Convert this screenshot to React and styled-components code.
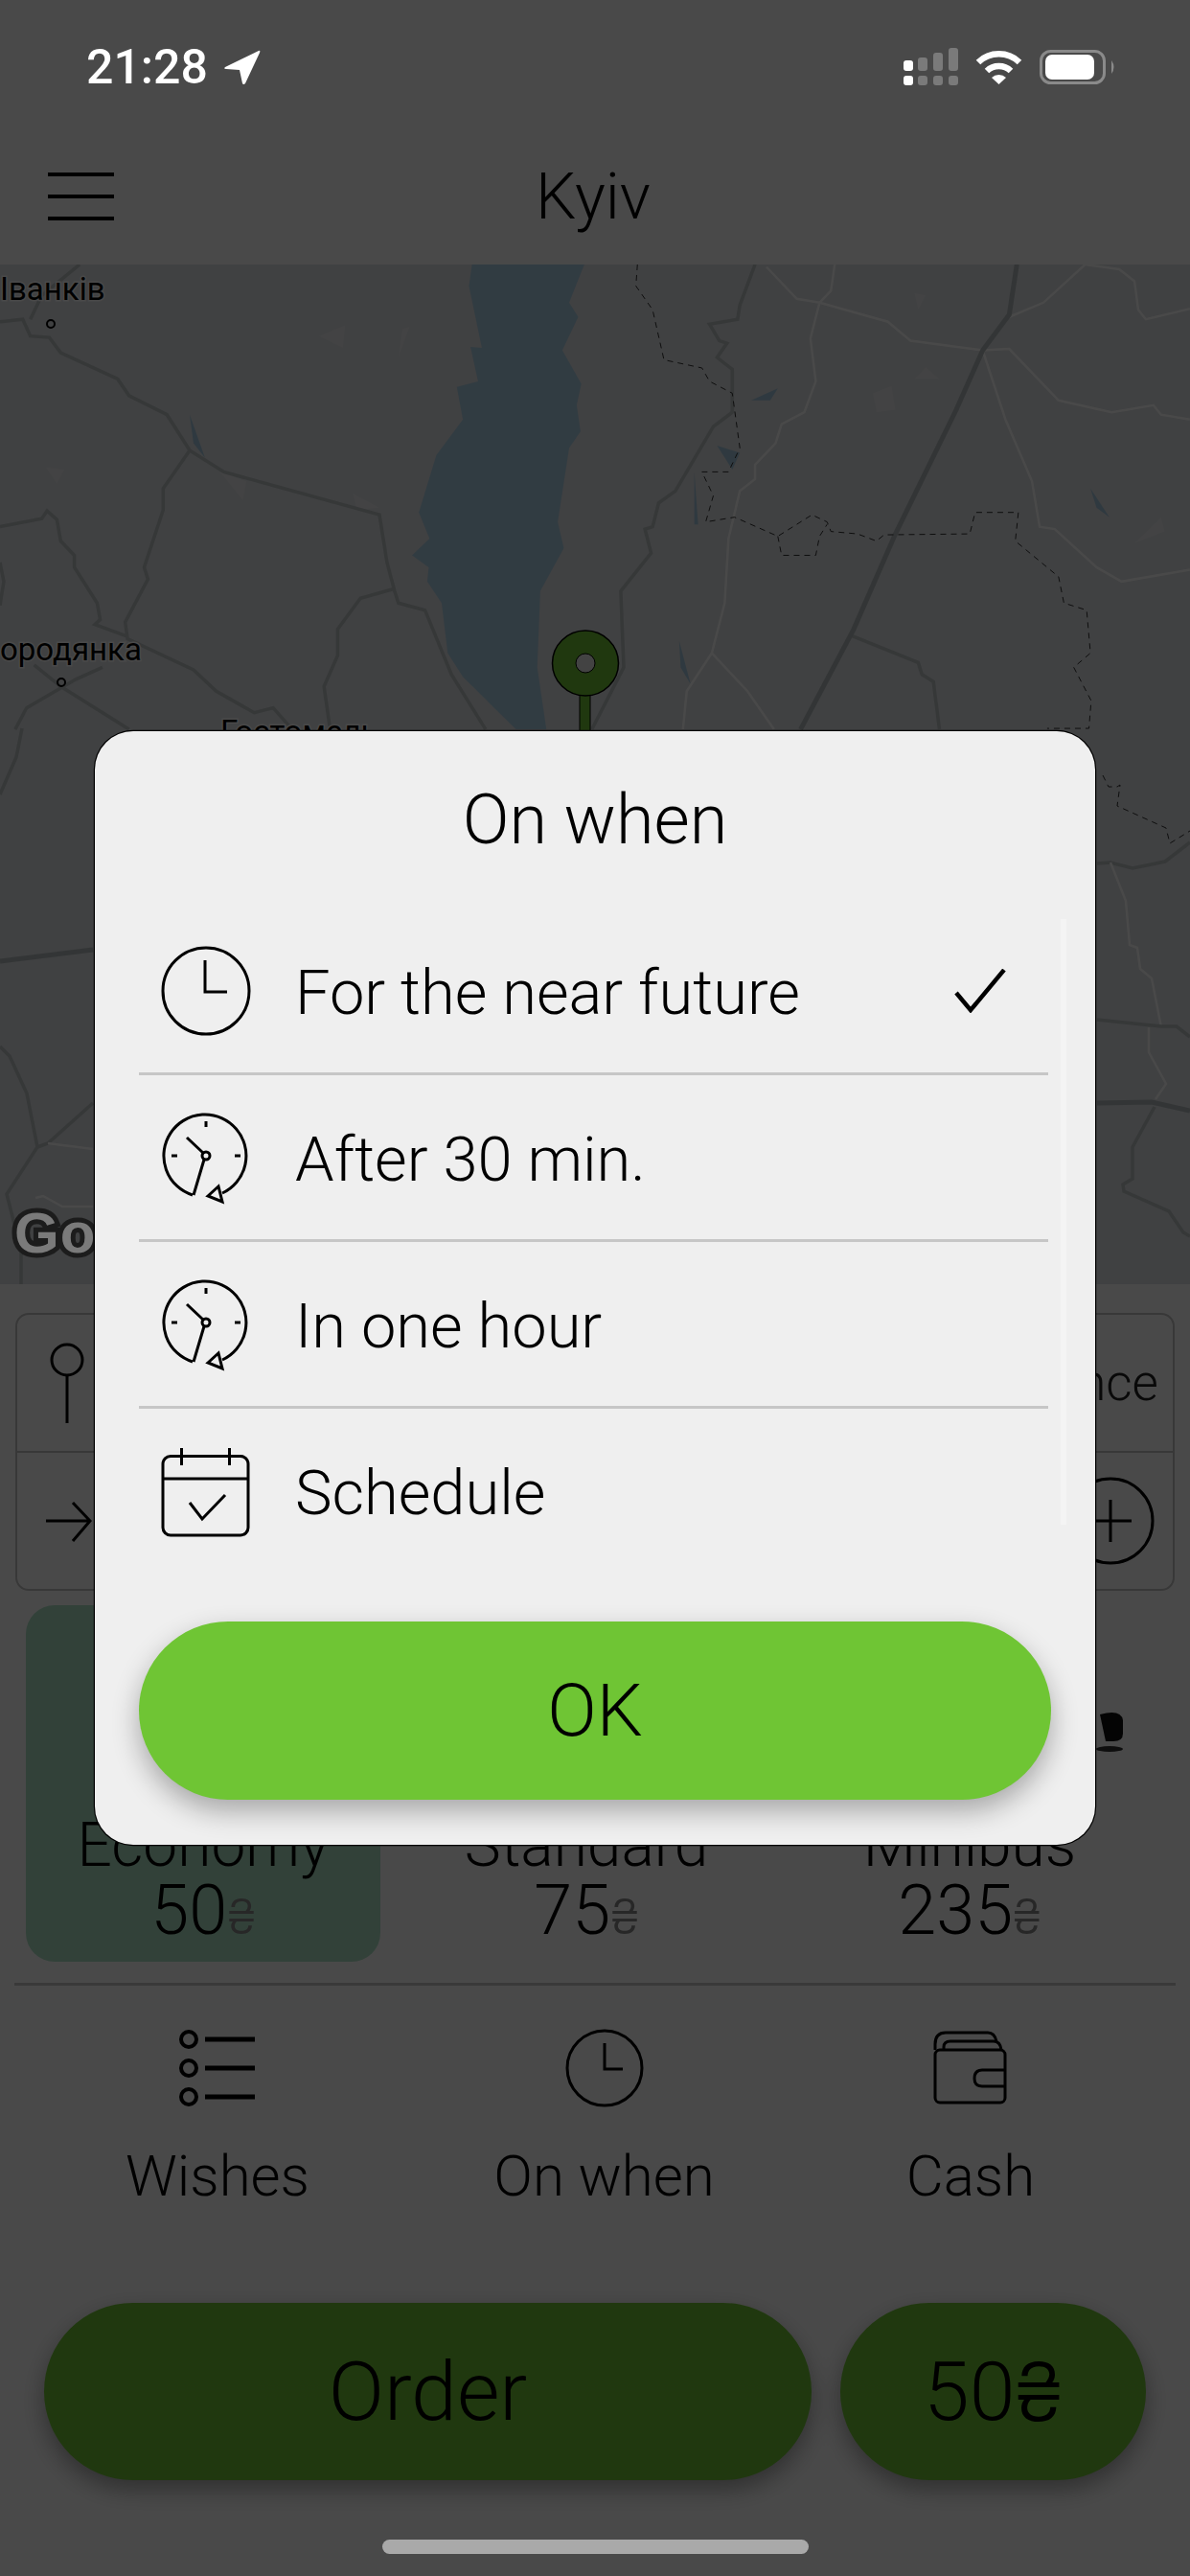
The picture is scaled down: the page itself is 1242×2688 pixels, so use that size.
import styled, { createGlobalStyle } from 'styled-components'

const GlobalStyle = createGlobalStyle`
    html, body { margin: 0; padding: 0; background: #fff; }
    * { box-sizing: border-box; }
    body { font-family: Roboto, "Liberation Sans", sans-serif; font-weight: 300; color: #000; }
`;

const Page = styled.div`
    position: relative;
    width: 1242px;
    height: 2688px;
    overflow: hidden;
    background: #fff;
`;

/* ---- underlay ---- */
const TopBar = styled.header`
    height: 276px;
    padding: 134px 50px 0;
    display: grid;
    grid-template-columns: 1fr auto 1fr;
    align-items: center;
`;
const Burger = styled.div`
    width: 69px;
    height: 50px;
    display: flex;
    flex-direction: column;
    justify-content: space-between;
    span { height: 4px; background: #000; }
`;
const City = styled.div`
    font-size: 67px;
    margin-right: 4px;
`;

const MapArea = styled.div`
    height: 1064px;
    background: #dee1e5;
    overflow: hidden;
    svg { display: block; }
`;
const Road = styled.path`
    fill: none;
    vector-effect: non-scaling-stroke;
    stroke: ${p => p.$kind === 'main' ? '#b2babc' : p.$kind === 'thin' ? '#fff' : p.$kind === 'border' ? '#333' : '#bcc2c4'};
    stroke-width: ${p => p.$kind === 'main' ? 5 : p.$kind === 'thin' ? 2.5 : p.$kind === 'border' ? 1 : 3.5};
    stroke-dasharray: ${p => p.$kind === 'border' ? '6 5' : 'none'};
`;
const Place = styled.text`
    font-family: Roboto, sans-serif;
    font-weight: 400;
    font-size: 33px;
    fill: #000;
    stroke: #fff;
    stroke-width: 3px;
    paint-order: stroke;
`;

const AddressCard = styled.section`
    margin: 30px 16px 0 16px;
    height: 290px;
    border: 2px solid #c4c4c4;
    border-radius: 14px;
    display: flex;
    flex-direction: column;
`;
const AddressRow = styled.div`
    flex: 1;
    display: flex;
    align-items: center;
    justify-content: space-between;
    padding: 0 ${p => p.$right}px 0 ${p => p.$left}px;
    border-top: ${p => p.$line ? '2px solid #c4c4c4' : 'none'};
`;
const Entrance = styled.span`
    font-size: 53px;
    color: #222;
`;

const CarGrid = styled.section`
    margin-top: 15px;
    padding-left: 27px;
    display: grid;
    grid-template-columns: repeat(3, 370px);
    column-gap: 30px;
`;
const CarTile = styled.div`
    height: 372px;
    border-radius: 30px;
    background: ${p => p.$active ? '#b0e4c8' : 'transparent'};
    display: flex;
    flex-direction: column;
    align-items: center;
    padding-top: 62px;
    svg { flex: none; }
`;
const CarName = styled.div`
    font-size: 64px;
    line-height: 66px;
    margin-top: 6px;
`;
const CarPrice = styled.div`
    font-size: 72px;
    line-height: 70px;
`;
const Hryvnia = styled.span`
    font-family: Inter, "Liberation Sans", sans-serif;
    font-weight: 300;
    font-size: ${p => p.$big ? '84px' : '50px'};
    color: ${p => p.$big ? '#000' : '#888'};
`;

const Rule = styled.hr`
    margin: 22px 15px 0;
    border: 0;
    border-top: 3px solid #c8c8c8;
`;

const Options = styled.nav`
    height: 331px;
    padding: 45px 0 0 27px;
    display: grid;
    grid-template-columns: 400px 407px 358px;
    align-items: start;
`;
const Option = styled.div`
    display: flex;
    flex-direction: column;
    align-items: center;
    gap: 38px;
    font-size: 60px;
    line-height: 68px;
    svg { display: block; }
`;

const Actions = styled.div`
    padding: 0 46px;
    display: flex;
    gap: 30px;
`;
const Pill = styled.div`
    flex: ${p => p.$grow ? 1 : '0 0 319px'};
    height: 185px;
    border-radius: 93px;
    background: #6fc534;
    box-shadow: 0 10px 24px rgba(0, 0, 0, .35);
    display: flex;
    align-items: center;
    justify-content: center;
    font-size: 86px;
`;

const Dim = styled.div`
    position: absolute;
    inset: 0;
    background: rgba(0, 0, 0, .712);
`;

/* ---- things above the dim layer ---- */
const StatusBar = styled.div`
    position: absolute;
    top: 48px;
    left: 0;
    right: 0;
    height: 44px;
    padding: 0 72px 0 90px;
    display: flex;
    align-items: center;
    justify-content: space-between;
    svg { display: block; }
`;
const Clock = styled.div`
    display: flex;
    align-items: center;
    gap: 16px;
    color: #fff;
    font-size: 50px;
    font-weight: 500;
`;
const GoogleMark = styled.div`
    position: absolute;
    left: 15px;
    top: 1247px;
    font-family: "Liberation Sans", sans-serif;
    font-weight: 700;
    font-size: 60px;
    line-height: 80px;
    letter-spacing: 1px;
    color: #7a7a7a;
    -webkit-text-stroke: 10px #1c1c1c;
    paint-order: stroke fill;
`;
const HomeBar = styled.div`
    position: absolute;
    left: 399px;
    top: 2650px;
    width: 445px;
    height: 15px;
    border-radius: 8px;
    background: #a9a9a9;
`;

/* ---- modal ---- */
const Modal = styled.div`
    position: absolute;
    left: 99px;
    top: 763px;
    width: 1044px;
    height: 1162px;
    padding: 0 46px;
    border-radius: 40px;
    background: #efefef;
    box-shadow: 0 0 0 1.2px #000;
`;
const ModalTitle = styled.div`
    height: 185px;
    display: flex;
    align-items: center;
    justify-content: center;
    font-size: 72px;
`;
const WhenList = styled.div`
    height: 696px;
    width: 949px;
`;
const WhenRow = styled.div`
    height: 174px;
    padding-left: 5px;
    display: flex;
    align-items: center;
    gap: 18px;
    font-size: 65px;
    border-bottom: ${p => p.$last ? 'none' : '3px solid #c6c6c6'};
    svg { flex: none; display: block; }
`;
const WhenLabel = styled.span`
    padding-top: ${p => p.$last ? 1 : 5}px;
`;
const Tick = styled.svg`
    margin-left: auto;
    margin-right: 44px;
`;
const ScrollTrack = styled.div`
    position: absolute;
    left: 1008px;
    top: 196px;
    width: 6px;
    height: 632px;
    background: #f4f4f4;
`;
const OkButton = styled.div`
    margin-top: 48px;
    height: 186px;
    border-radius: 93px;
    background: #6fc534;
    box-shadow: 0 12px 28px rgba(0, 0, 0, .3);
    display: flex;
    align-items: center;
    justify-content: center;
    font-size: 76px;
`;

/* ---- drawings ---- */
const ZOOM_ROADS = [
    ['minor', '0,675 30,670 40,705 65,708 80,740 155,795 170,830 220,870 250,945 295,990 500,1080 510,1180 520,1240 525,1265 560,1280 595,1415 640,1530'],
    ['minor', '250,945 215,1025 215,1070 190,1190 195,1215 165,1305 168,1340 255,1405 285,1450 335,1495 360,1485 385,1530'],
    ['minor', '520,1235 475,1255 445,1320 445,1375 427,1440 435,1530'],
    ['minor', '0,1105 55,1088 62,1072 75,1090 80,1135 98,1165 98,1190 128,1265 132,1300 125,1310 168,1335'],
    ['minor', '0,1180 5,1220 0,1270'],
    ['minor', '45,1395 80,1440 170,1530'],
    ['minor', '135,1400 100,1425 35,1485 20,1530'],
    ['minor', '40,670 55,620 105,555'],
    ['minor', '995,555 975,640 972,670 935,680 948,715 958,720 945,750 965,775 965,865 940,895 890,1030 868,1055 860,1105 850,1110 858,1160 818,1240 822,1400 780,1530'],
    ['thin', '1010,560 1050,627 1080,635 1170,675 1200,715 1295,735 1330,732 1395,840 1465,865 1520,850 1530,870 1568,880'],
    ['thin', '1080,635 1068,710 1075,800 1060,865 1030,890 1022,930 995,975 995,1005 975,1030 960,1130 955,1265 938,1370 905,1450 900,1530'],
    ['thin', '938,1370 985,1450 1020,1530'],
    ['thin', '1100,555 1095,610 1080,635'],
    ['thin', '1430,555 1375,635 1330,665'],
    ['thin', '1430,555 1475,565 1495,590 1500,650 1510,670 1568,648'],
    ['thin', '1295,735 1325,880 1360,1010 1370,1105 1390,1110 1445,1190 1478,1220 1568,1195'],
    ['minor', '1120,1332 1210,1390 1215,1415 1230,1430 1238,1530'],
    ['main', '1340,555 1330,660 1295,735 1260,860 1180,1120 1125,1320 1055,1530'],
    ['border', '840,555 838,600 860,650 875,755 925,772 935,800 965,825 975,940 960,990 925,990 940,1040 930,1095 968,1085 1025,1125 1070,1080 1090,1095 1095,1115 1130,1120 1155,1135 1165,1122 1278,1120 1285,1075 1342,1075 1338,1135 1395,1210 1402,1265 1432,1280 1437,1370 1415,1400 1438,1470 1435,1528 1380,1528'],
    ['border', '1025,1125 1030,1165 1075,1165 1080,1125 1090,1100'],
];
const PAGE_ROADS = [
    ['minor', '23,760 17,790 0,829'],
    ['main', '0,1003 97,991'],
    ['minor', '0,1092 10,1102 28,1141 39,1197 7,1246 22,1305 22,1340'],
    ['minor', '39,1197 50,1193 97,1151'],
    ['thin', '50,1193 97,1199'],
    ['thin', '37,1250 45,1248 65,1259 97,1259'],
    ['minor', '1145,901 1159,900 1182,906 1216,899 1242,879'],
    ['thin', '1159,900 1175,940 1179,986 1187,989 1190,1011 1202,1021 1212,1072'],
    ['minor', '1145,1064 1212,1071 1228,1071 1242,1082'],
    ['main', '1145,1151 1202,1150 1242,1159'],
    ['thin', '1199,1072 1199,1098 1217,1131 1206,1147'],
    ['minor', '1205,1155 1182,1197 1182,1230 1172,1236 1173,1243 1220,1264 1235,1286 1242,1290'],
    ['border', '1151,809 1157,821 1166,821 1169,819 1166,841 1217,864 1221,880 1242,867'],
];
const PONDS = [
    '250,870 270,960 255,930', '990,840 1025,815 1015,840', '945,935 975,950 965,985',
    '895,1345 910,1435 897,1400', '915,990 920,1100 915,1100', '1437,1025 1462,1085 1445,1065',
];
const PATCHES = [
    '420,705 455,682 452,730', '525,750 540,685 530,690', '1150,825 1175,810 1180,860 1155,865',
    '1205,615 1220,620 1210,650', '1205,795 1220,770 1238,795', '1495,1140 1530,1085 1535,1115',
    '60,980 85,985 75,1015', '290,990 325,1010 320,1050', '465,1035 500,1065 470,1070',
];

const MapDrawing = () => (
    <svg width="1242" height="1064" viewBox="0 0 1242 1064">
        <g transform="scale(0.792 0.4975) translate(0 -555)">
            {PATCHES.map((p) => <polygon key={p} points={p} fill="#e8e9ec" />)}
            <path fill="#acd0e5" d="M622 555 L618 600 L635 730 L620 728 L630 800 L602 812 L610 880 L575 955 L552 1075 L566 1130 L543 1165 L565 1190 L563 1220 L582 1265 L590 1370 L610 1420 L680 1530 L720 1530 L708 1400 L712 1240 L743 1150 L735 1095 L750 940 L765 905 L760 850 L766 805 L741 735 L762 665 L750 635 L770 555 Z" />
            {PONDS.map((p) => <polygon key={p} points={p} fill="#a4c8de" />)}
            {ZOOM_ROADS.map(([kind, pts]) => <Road key={pts} $kind={kind} d={'M' + pts} />)}
        </g>
        <g transform="translate(0 -276)">
            {PAGE_ROADS.map(([kind, pts]) => <Road key={pts} $kind={kind} d={'M' + pts} />)}
            <Place x="0" y="313">Іванків</Place>
            <circle cx="53" cy="338" r="4" fill="none" stroke="#000" strokeWidth="2" />
            <Place x="0" y="689">ородянка</Place>
            <circle cx="64" cy="712" r="4" fill="none" stroke="#000" strokeWidth="2" />
            <Place x="230" y="775">Гостомель</Place>
            <rect x="605" y="722" width="11" height="50" fill="#6fc534" stroke="#000" strokeWidth="1" />
            <ellipse cx="611" cy="692" rx="34.5" ry="34" fill="#6fc534" stroke="#000" strokeWidth="1.5" />
            <circle cx="611" cy="692" r="10" fill="#e8e8e8" stroke="#000" strokeWidth="1" />
        </g>
    </svg>
);

const StatusIcons = () => (
    <svg width="230" height="44" viewBox="0 0 230 44">
        <g fill="#7a7a7a">
            <rect x="18" y="12" width="10" height="14" rx="3" />
            <rect x="34" y="7" width="10" height="19" rx="3" />
            <rect x="50" y="2" width="10" height="24" rx="3" />
            <rect x="18" y="31" width="10" height="10" rx="3" />
            <rect x="34" y="31" width="10" height="10" rx="3" />
            <rect x="50" y="31" width="10" height="10" rx="3" />
        </g>
        <rect x="3" y="15" width="10" height="11" rx="3" fill="#fff" />
        <rect x="3" y="31" width="10" height="10" rx="3" fill="#fff" />
        <g fill="none" stroke="#fff" strokeWidth="6.5">
            <path d="M81 17 A 31 31 0 0 1 124 17" />
            <path d="M90 26 A 18 18 0 0 1 115 26" />
        </g>
        <path d="M95 33 A 11 11 0 0 1 110 33 L102.5 40 Z" fill="#fff" />
        <rect x="146.5" y="5.5" width="66" height="33" rx="10" fill="none" stroke="#8a8a8a" strokeWidth="3" />
        <rect x="151" y="9" width="51" height="26" rx="7" fill="#fff" />
        <path d="M220 15 Q225 22 220 29 Z" fill="#8a8a8a" />
    </svg>
);

const NavArrow = () => (
    <svg width="40" height="40" viewBox="0 0 40 40">
        <path fill="#fff" d="M37 3 L2 20 Q0 22 3 22 L17 23 L20 37 Q21 39 23 37 L38 5 Q39 2 37 3 Z" />
    </svg>
);

const ClockIcon = () => (
    <svg width="140" height="140" viewBox="0 -6 140 140" fill="none" stroke="#000" strokeWidth="3">
        <circle cx="65" cy="64" r="45" />
        <path d="M64 32V65H87" />
    </svg>
);

const SmallClock = () => (
    <svg width="82" height="82" viewBox="0 0 82 82" fill="none" stroke="#000" strokeWidth="3">
        <circle cx="41" cy="41" r="39" />
        <path d="M41 15V42H60" />
    </svg>
);

const RewindClock = () => (
    <svg width="140" height="140" viewBox="0 -2 140 140" fill="none" stroke="#000" strokeWidth="3">
        <path d="M51 107 A43 43 0 1 1 82 105" />
        <path d="M65 30V36M29 66H35M95 66H101" />
        <circle cx="65" cy="66" r="4" />
        <path d="M45 47L62 63M63 70L52 107" />
        <path d="M67 108L78 98L82 114Z" />
    </svg>
);

const CalendarIcon = () => (
    <svg width="140" height="140" viewBox="0 -3 140 140" fill="none" stroke="#000" strokeWidth="3">
        <rect x="20" y="29.5" width="89" height="82.5" rx="8" />
        <path d="M20 53H109M39.5 21V39M89.5 21V39" />
        <path d="M48 78L61 95L85 70" />
    </svg>
);

const WishesIcon = () => (
    <svg width="80" height="82" viewBox="0 0 80 82" fill="none" stroke="#000">
        <g strokeWidth="4">
            <circle cx="10" cy="11" r="8" />
            <circle cx="10" cy="41" r="8" />
            <circle cx="10" cy="71" r="8" />
        </g>
        <path strokeWidth="5" d="M27 11H79M27 41H79M27 71H79" />
    </svg>
);

const WalletIcon = () => (
    <svg width="82" height="82" viewBox="13 19 82 82" fill="none" stroke="#000" strokeWidth="3">
        <rect x="17" y="41" width="73" height="55" rx="5" />
        <path d="M17 41V35Q17 23 28 23H72Q79 23 81 32" />
        <path d="M26 41V38Q26 32 33 32H78Q85 32 86 41" />
        <path d="M90 62H66Q58 62 58 71Q58 79 66 79H90" />
    </svg>
);

const Van = () => (
    <svg width="325" height="150" viewBox="0 0 325 150">
        <path d="M10 70V30Q10 12 40 12H270Q300 12 315 40L322 55V75Q322 82 312 82H20Q10 82 10 70Z" fill="#fff" />
        <path d="M298 52Q320 46 322 58V72Q322 80 312 80H304Z" fill="#111" />
        <ellipse cx="308" cy="88" rx="14" ry="3" fill="#333" />
    </svg>
);

const CARS = [
    { name: 'Economy', price: 50, active: true },
    { name: 'Standard', price: 75 },
    { name: 'Minibus', price: 235, van: true },
];

const WHEN = [
    { label: 'For the near future', icon: <ClockIcon />, picked: true },
    { label: 'After 30 min.', icon: <RewindClock /> },
    { label: 'In one hour', icon: <RewindClock /> },
    { label: 'Schedule', icon: <CalendarIcon />, last: true },
];

const App = () => {
    return (
        <Page>
            <GlobalStyle />
            <TopBar>
                <Burger><span /><span /><span /></Burger>
                <City>Kyiv</City>
            </TopBar>
            <MapArea><MapDrawing /></MapArea>
            <AddressCard>
                <AddressRow $left={32} $right={15}>
                    <svg width="40" height="84" viewBox="0 0 40 84" fill="none" stroke="#000" strokeWidth="3">
                        <circle cx="20" cy="18" r="16" />
                        <path d="M20 34V84" />
                    </svg>
                    <Entrance>Entrance</Entrance>
                </AddressRow>
                <AddressRow $line $left={28} $right={19}>
                    <svg width="50" height="50" viewBox="0 0 50 50" fill="none" stroke="#000" strokeWidth="3">
                        <path d="M2 25H48M30 6L48 25L30 46" />
                    </svg>
                    <svg width="92" height="92" viewBox="0 0 92 92" fill="none" stroke="#000" strokeWidth="3">
                        <circle cx="46" cy="46" r="44" />
                        <path d="M46 24V68M24 46H68" />
                    </svg>
                </AddressRow>
            </AddressCard>
            <CarGrid>
                {CARS.map((car) => (
                    <CarTile key={car.name} $active={car.active}>
                        {car.van ? <Van /> : <svg width="325" height="150" />}
                        <CarName>{car.name}</CarName>
                        <CarPrice>{car.price}<Hryvnia>₴</Hryvnia></CarPrice>
                    </CarTile>
                ))}
            </CarGrid>
            <Rule />
            <Options>
                <Option><WishesIcon />Wishes</Option>
                <Option><SmallClock />On when</Option>
                <Option><WalletIcon />Cash</Option>
            </Options>
            <Actions>
                <Pill $grow>Order</Pill>
                <Pill>50<Hryvnia $big>₴</Hryvnia></Pill>
            </Actions>

            <Dim />

            <StatusBar>
                <Clock>21:28 <NavArrow /></Clock>
                <StatusIcons />
            </StatusBar>
            <GoogleMark>Google</GoogleMark>
            <HomeBar />

            <Modal>
                <ModalTitle>On when</ModalTitle>
                <WhenList>
                    {WHEN.map((w) => (
                        <WhenRow key={w.label} $last={w.last}>
                            {w.icon}
                            <WhenLabel $last={w.last}>{w.label}</WhenLabel>
                            {w.picked && (
                                <Tick width="54" height="46" viewBox="0 0 54 46" fill="none" stroke="#000" strokeWidth="4.5">
                                    <path d="M2 25L17 43L52 1" />
                                </Tick>
                            )}
                        </WhenRow>
                    ))}
                </WhenList>
                <ScrollTrack />
                <OkButton>OK</OkButton>
            </Modal>
        </Page>
    )
}

export default App
